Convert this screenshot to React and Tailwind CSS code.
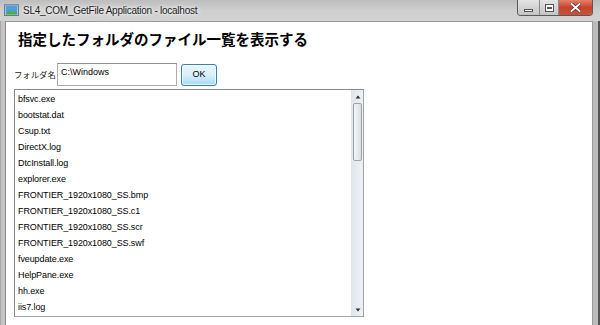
import React from "react";

const files = [
  "bfsvc.exe",
  "bootstat.dat",
  "Csup.txt",
  "DirectX.log",
  "DtcInstall.log",
  "explorer.exe",
  "FRONTIER_1920x1080_SS.bmp",
  "FRONTIER_1920x1080_SS.c1",
  "FRONTIER_1920x1080_SS.scr",
  "FRONTIER_1920x1080_SS.swf",
  "fveupdate.exe",
  "HelpPane.exe",
  "hh.exe",
  "iis7.log",
];

function AppIcon() {
  return (
    <svg width="15" height="13" viewBox="0 0 15 13">
      <rect x="0.5" y="0.5" width="14" height="11" fill="#dfe6ee" stroke="#6b7c8f" />
      <rect x="1.5" y="2" width="12" height="8.5" fill="#4f9fe0" />
      <path d="M1.5 10.5 L5 6 L8 8.5 L10.5 6.5 L13.5 10.5 Z" fill="#4fae3a" />
      <rect x="0.5" y="0.5" width="14" height="1.5" fill="#8fa6bd" />
    </svg>
  );
}

export default function App() {
  return (
    <div
      className="w-[600px] h-[325px] overflow-hidden flex flex-col bg-[#c6c6c6]"
      style={{ fontFamily: '"Liberation Sans", Arial, sans-serif' }}
    >
      {/* title bar */}
      <div className="h-[21px] flex items-start bg-gradient-to-b from-[#bdbdbd] via-[#cfcfcf] to-[#d2d2d2]">
        <div className="flex items-center pl-[4px] pt-[4px] gap-[4px]">
          <AppIcon />
          <span className="text-[10px] tracking-[-0.25px] text-[#1a1a1a] leading-[12px] [text-shadow:0_0_6px_#ffffff,0_0_3px_#ffffff]">
            SL4_COM_GetFile Application - localhost
          </span>
        </div>
        <div className="ml-auto mr-[7px] flex h-[16px] border border-t-0 border-[#595959] rounded-b-[4px] overflow-hidden">
          <div className="w-[22px] flex items-center justify-center bg-gradient-to-b from-[#e4e4e4] to-[#c4c4c4] border-r border-[#8a8a8a]">
            <div className="w-[9px] h-[3px] bg-white border border-[#555] mt-[5px]" />
          </div>
          <div className="w-[19px] flex items-center justify-center bg-gradient-to-b from-[#e4e4e4] to-[#c4c4c4] border-r border-[#8a8a8a]">
            <div className="w-[9px] h-[8px] bg-white border border-[#555] flex items-center justify-center">
              <div className="w-[5px] h-[2px] border border-[#555]" />
            </div>
          </div>
          <div className="w-[33px] flex items-center justify-center bg-gradient-to-b from-[#e0806c] via-[#c7432c] to-[#c9523a]">
            <svg width="11" height="9" viewBox="0 0 11 9">
              <path d="M1.5 1 L9.5 8 M9.5 1 L1.5 8" stroke="#5a1a10" strokeWidth="3.2" strokeLinecap="square" />
              <path d="M1.5 1 L9.5 8 M9.5 1 L1.5 8" stroke="#ffffff" strokeWidth="2" strokeLinecap="square" />
            </svg>
          </div>
        </div>
      </div>

      {/* body */}
      <div className="flex-1 flex min-h-0">
        <div className="w-[6px] bg-[#c4c4c4] border-l border-[#a8a8a8] border-r border-r-[#8a8a8a]" />
        <div className="flex-1 bg-white border-t border-[#9a9a9a] flex flex-col pl-[8px] min-w-0">
          <div
            className="pl-[4px] pt-[7px] h-[41px] text-[14.5px] font-bold text-black leading-[20px]"
            style={{ fontFamily: '"Noto Sans CJK JP", sans-serif' }}
          >
            指定したフォルダのファイル一覧を表示する
          </div>
          <div className="flex items-center h-[23px] mb-[3px]">
            <span
              className="text-[8.4px] text-[#222] w-[43px]"
              style={{ fontFamily: '"Noto Sans CJK JP", sans-serif' }}
            >
              フォルダ名
            </span>
            <div className="w-[120px] h-[23px] border border-[#abadb3] border-t-[#8e9199] bg-white pl-[3px] pt-[3px] text-[9px] text-black leading-[11px]">
              C:\Windows
            </div>
            <div className="ml-[4px] w-[36px] h-[22px] mt-[1px] rounded-[3px] border border-[#3c7fb1] bg-gradient-to-b from-[#eaf6fd] via-[#d9f0fc] to-[#a7d9f5] flex items-center justify-center text-[9px] text-black shadow-[inset_0_0_0_1px_rgba(255,255,255,0.7)]">
              OK
            </div>
          </div>
          <div className="w-[350px] h-[228px] border border-[#828790] border-b-[#a0a4ab] border-r-[#a0a4ab] flex">
            <div className="flex-1 flex flex-col pl-[3px] pt-[1px]">
              {files.map((f) => (
                <div key={f} className="h-[16px] leading-[16px] text-[9px] tracking-[-0.1px] text-black whitespace-nowrap">
                  {f}
                </div>
              ))}
            </div>
            <div className="w-[12px] flex flex-col bg-gradient-to-r from-[#e3e7ec] to-[#eef1f4] border-l border-[#dde2e8]">
              <div className="h-[13px] flex items-center justify-center">
                <svg width="6" height="4" viewBox="0 0 6 4">
                  <path d="M3 0.5 L5.5 3.5 L0.5 3.5 Z" fill="#303030" />
                </svg>
              </div>
              <div className="h-[58px] mx-[1px] rounded-[2px] border border-[#9aa3ad] bg-gradient-to-r from-[#f4f5f7] via-[#e9ebee] to-[#d9dde2]" />
              <div className="flex-1" />
              <div className="h-[13px] flex items-center justify-center">
                <svg width="6" height="4" viewBox="0 0 6 4">
                  <path d="M0.5 0.5 L5.5 0.5 L3 3.5 Z" fill="#303030" />
                </svg>
              </div>
            </div>
          </div>
        </div>
        <div className="w-[8px] bg-[#bcbcbc] border-l border-[#9a9a9a] border-r-2 border-r-[#555555]" />
      </div>
    </div>
  );
}
